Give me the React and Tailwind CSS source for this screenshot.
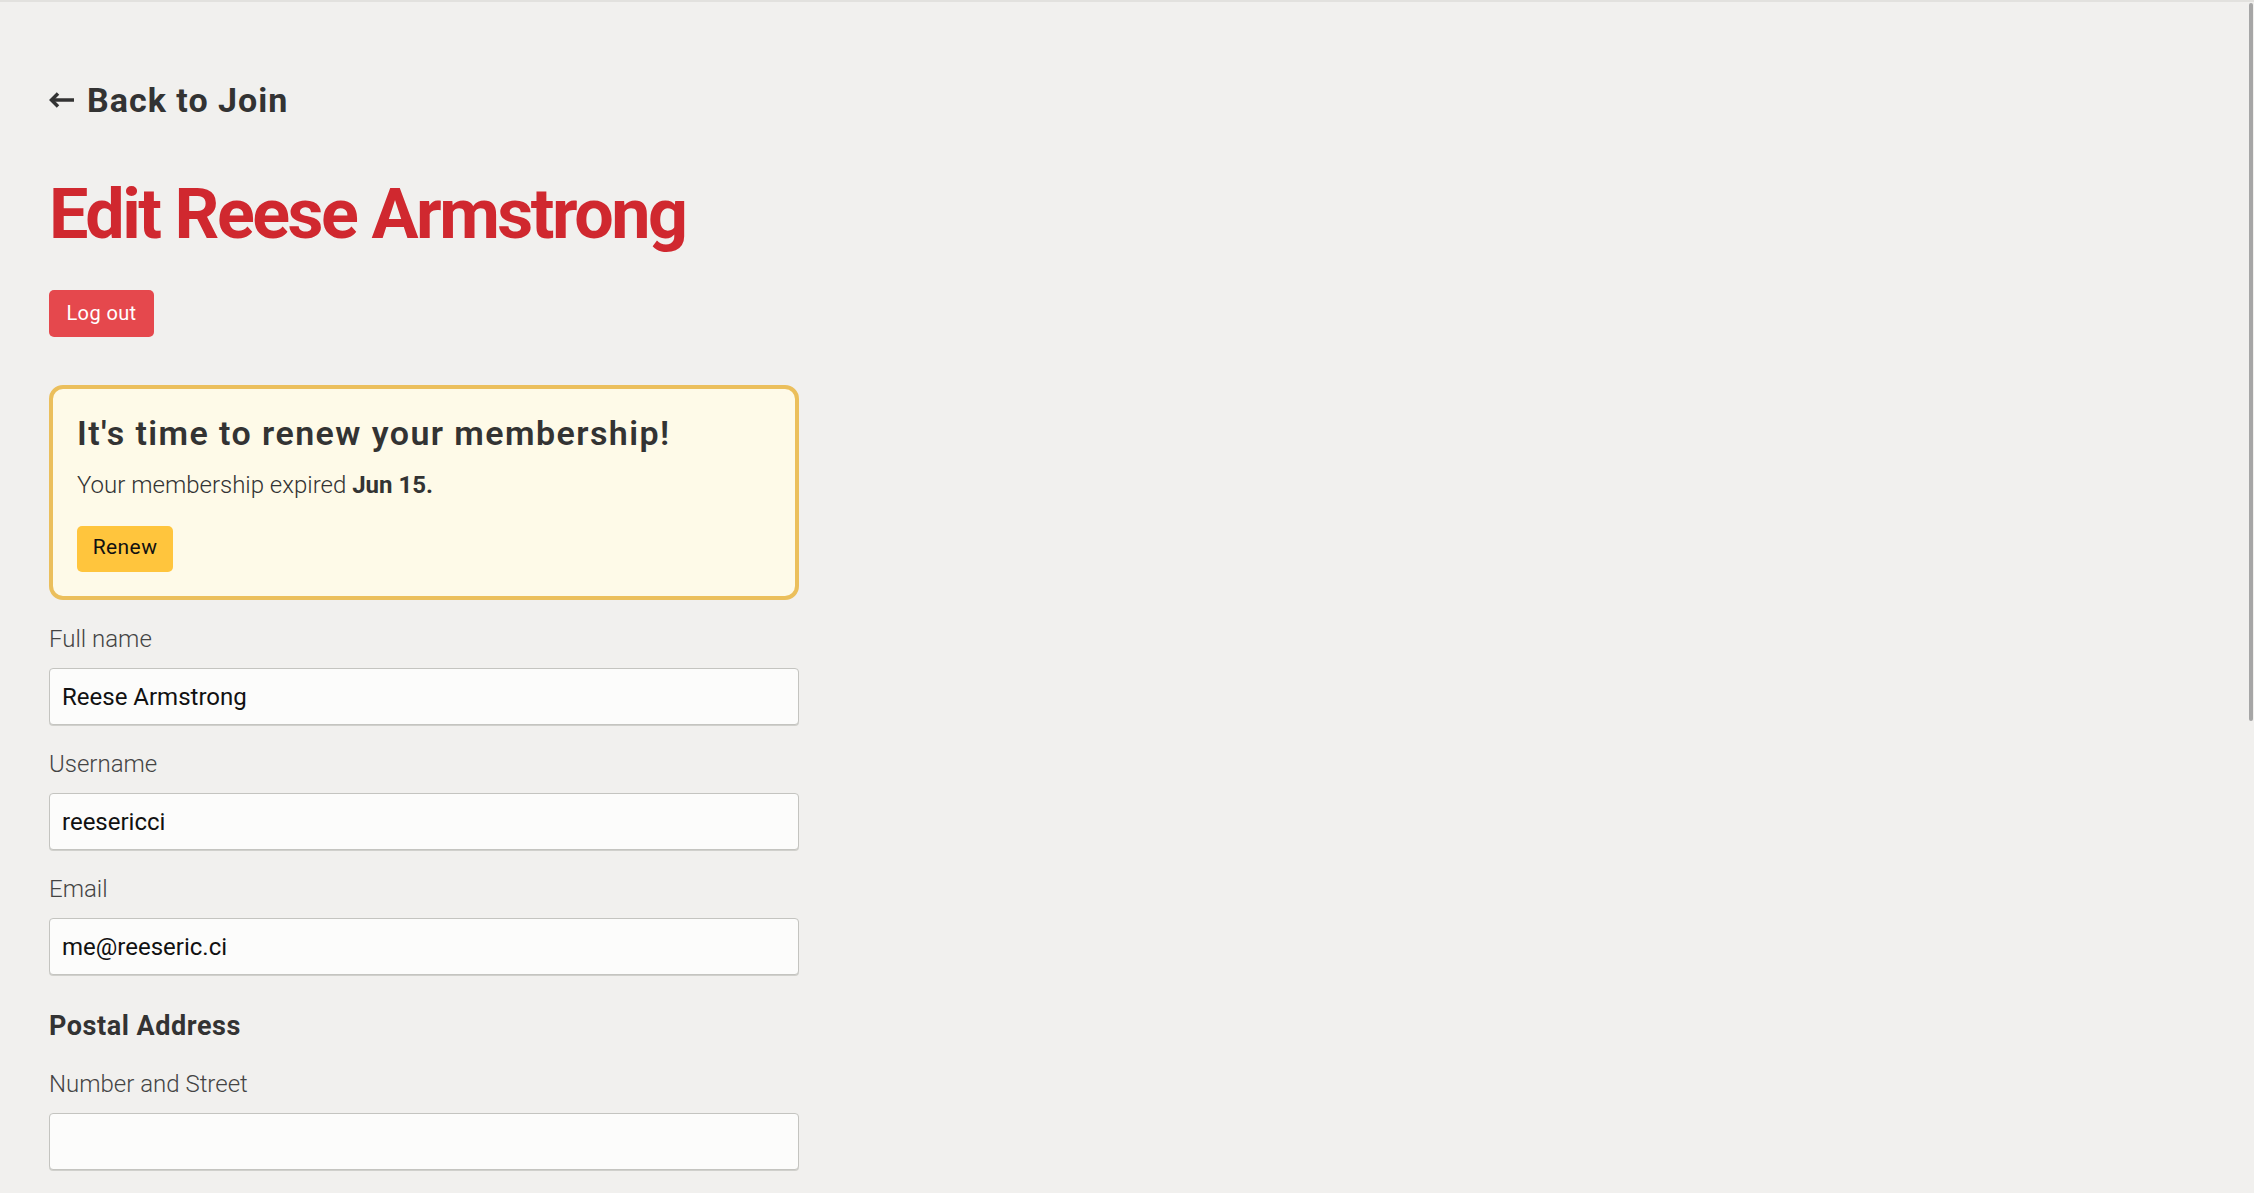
export default function App() {
  const fields = [
    { label: "Full name", value: "Reese Armstrong" },
    { label: "Username", value: "reesericci" },
    { label: "Email", value: "me@reeseric.ci" },
  ];

  return (
    <div className="relative h-[1193px] overflow-hidden bg-[#f1f0ee] font-['Roboto',sans-serif] text-[#333]">
      <div className="h-[2px] bg-[#e2e1de]" />

      <div className="pl-[49px]">
        <a href="#" className="mt-[78px] flex h-[40px] items-center gap-[12px] text-[34px] leading-[40px] font-bold tracking-[0.03em] text-[#333]">
          <svg width="26" height="16" viewBox="0 0 26 16" fill="none" stroke="#333" strokeWidth="3.5" strokeLinejoin="miter">
            <path d="M9 1.5 L2.5 8 L9 14.5" />
            <path d="M3 8 H25" />
          </svg>
          <span>Back to Join</span>
        </a>

        <h1 className="mt-[54px] text-[70px] leading-[80px] font-bold tracking-[-0.035em] text-[#d0282f]">
          Edit Reese Armstrong
        </h1>

        <button className="mt-[36px] flex h-[47px] w-[105px] items-center justify-center rounded-[5px] bg-[#e5484d] pb-[2px] text-[20px] font-normal tracking-[0.02em] text-white">
          Log out
        </button>

        <div className="mt-[48px] w-[750px] rounded-[14px] border-[4px] border-[#ebbf5c] bg-[#fefae8] pt-[24px] pb-[24px] pl-[24px]">
          <h2 className="text-[34px] leading-[40px] font-semibold tracking-[0.042em] text-[#333]">
            It's time to renew your membership!
          </h2>
          <p className="mt-[16px] text-[24px] leading-[32px] font-light text-[#333]">
            Your membership expired <span className="font-bold">Jun 15.</span>
          </p>
          <button className="mt-[25px] flex h-[46px] w-[96px] items-center justify-center rounded-[5px] bg-[#ffc53d] pb-[2px] text-[21px] font-normal tracking-[0.02em] text-[#111]">
            Renew
          </button>
        </div>

        {fields.map((f) => (
          <div key={f.label}>
            <label className="mt-[23px] block text-[24px] leading-[32px] font-light text-[#444]">{f.label}</label>
            <div className="mt-[13px] flex h-[57px] w-[750px] items-center rounded-[4px] border border-[#c4c4c0] bg-[#fcfcfb] pl-[12px] text-[24px] text-[#111] shadow-[0_1px_0_#d0d0cc]">
              {f.value}
            </div>
          </div>
        ))}

        <h3 className="mt-[33px] text-[27px] leading-[36px] font-bold tracking-[0.02em] text-[#333]">Postal Address</h3>

        <label className="mt-[24px] block text-[24px] leading-[32px] font-light text-[#444]">Number and Street</label>
        <div className="mt-[13px] h-[57px] w-[750px] rounded-[4px] border border-[#c4c4c0] bg-[#fcfcfb] shadow-[0_1px_0_#d0d0cc]" />
      </div>

      <div className="absolute top-[3px] right-[1px] h-[718px] w-[4px] rounded-full bg-[#a6a6a6]" />
    </div>
  );
}
